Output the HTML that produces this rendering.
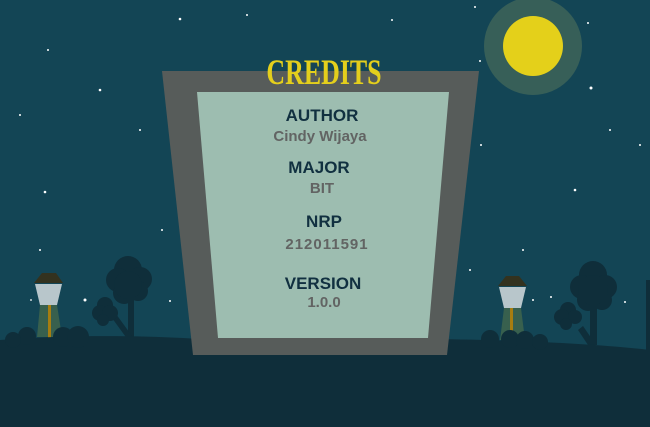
<!DOCTYPE html>
<html><head><style>
html,body{margin:0;padding:0;width:650px;height:427px;overflow:hidden;background:#134555}
svg{display:block}
text{font-family:"Liberation Sans",sans-serif;font-weight:bold;text-anchor:middle}
</style></head><body>
<svg width="650" height="427" viewBox="0 0 650 427">
<rect width="650" height="427" fill="#134555"/>
<g fill="#fff">
<circle cx="180" cy="19" r="1.3"/><circle cx="48" cy="50" r="1"/><circle cx="100" cy="90" r="1.3"/>
<circle cx="20" cy="115" r="1"/><circle cx="45" cy="192" r="1.3"/><circle cx="40" cy="250" r="1"/>
<circle cx="31" cy="300" r="0.9"/><circle cx="85" cy="300" r="1.5"/><circle cx="170" cy="301" r="1"/>
<circle cx="247" cy="15" r="1"/><circle cx="392" cy="20" r="1"/><circle cx="475" cy="7" r="1"/>
<circle cx="512" cy="21" r="1.5"/><circle cx="588" cy="23" r="1"/><circle cx="591" cy="88" r="1.5"/>
<circle cx="480" cy="61" r="1"/><circle cx="518" cy="90" r="1"/><circle cx="610" cy="130" r="1"/>
<circle cx="481" cy="145" r="1"/><circle cx="640" cy="145" r="1"/><circle cx="575" cy="190" r="1.3"/>
<circle cx="140" cy="130" r="1"/><circle cx="162" cy="230" r="1"/><circle cx="470" cy="270" r="1"/>
<circle cx="533" cy="300" r="1"/><circle cx="551" cy="297" r="1"/><circle cx="604" cy="302" r="1"/>
<circle cx="625" cy="302" r="1"/><circle cx="523" cy="250" r="1"/><circle cx="460" cy="210" r="1"/>
</g>
<circle cx="533" cy="46" r="49" fill="#375f58"/>
<circle cx="533" cy="46" r="30" fill="#e4d01a"/>
<g fill="#0f2e3a">
<circle cx="128" cy="270" r="14"/><circle cx="118" cy="280" r="12"/><circle cx="140" cy="279" r="12"/>
<circle cx="124" cy="293" r="11"/><circle cx="138" cy="291" r="10"/><circle cx="128" cy="285" r="14"/>
<rect x="128" y="295" width="6" height="45"/>
<polygon points="112,318 116,314 132,336 128,340"/>
<circle cx="105" cy="305" r="8"/><circle cx="100" cy="313" r="8"/><circle cx="110" cy="313" r="8"/><circle cx="103" cy="320" r="6"/>
<circle cx="593" cy="275" r="14"/><circle cx="582" cy="287" r="12"/><circle cx="605" cy="287" r="12"/>
<circle cx="588" cy="300" r="11"/><circle cx="602" cy="300" r="10"/><circle cx="593" cy="290" r="15"/>
<rect x="590" y="300" width="7" height="45"/>
<polygon points="578,330 583,326 596,345 590,348"/>
<circle cx="568" cy="310" r="8"/><circle cx="562" cy="317" r="8"/><circle cx="575" cy="317" r="7"/><circle cx="566" cy="324" r="6"/>
</g>
<g>
<polygon points="34,283 63,283 56,273 42,273" fill="#33321f"/>
<polygon points="35,284 62,284 57,305 40,305" fill="#b8c6cb"/>
<polygon points="40,305 57,305 62,337 37,337" fill="#38604e"/>
<rect x="48" y="305" width="3" height="33" fill="#a77d10"/>
<polygon points="498,286 527,286 519,276 506,276" fill="#33321f"/>
<polygon points="499,287 526,287 521,308 504,308" fill="#b8c6cb"/>
<polygon points="504,308 521,308 525,340 500,340" fill="#38604e"/>
<rect x="510" y="308" width="3" height="33" fill="#a77d10"/>
</g>
<path d="M0,340 C60,335 140,335 200,339 L430,339 C520,340 600,344 650,350 L650,427 L0,427 Z" fill="#0f2e3a"/>
<g fill="#0f2e3a">
<circle cx="27" cy="336" r="9"/><circle cx="13" cy="340" r="8"/><circle cx="63" cy="337" r="10"/><circle cx="78" cy="337" r="11"/>
<circle cx="490" cy="339" r="9"/><circle cx="510" cy="339" r="9"/><circle cx="525" cy="340" r="9"/><circle cx="540" cy="342" r="8"/>
<rect x="646" y="280" width="4" height="70"/>
</g>
<polygon points="162,71 479,71 447,355 193,355" fill="#575c5a"/>
<polygon points="197,92 449,92 428,338 218,338" fill="#9dbdb0"/>
<text x="324" y="84" font-size="36" fill="#e4cf1c" style="font-family:'Liberation Serif',serif" transform="translate(324,0) scale(0.72,1) translate(-324,0)">CREDITS</text>
<g font-size="17" fill="#113040">
<text x="322" y="121">AUTHOR</text>
<text x="319" y="173">MAJOR</text>
<text x="324" y="227">NRP</text>
<text x="323" y="289">VERSION</text>
</g>
<g font-size="15" fill="#626463">
<text x="320" y="141">Cindy Wijaya</text>
<text x="322" y="193">BIT</text>
<text x="327" y="249" letter-spacing="1">212011591</text>
<text x="324" y="307">1.0.0</text>
</g>
</svg>
</body></html>
